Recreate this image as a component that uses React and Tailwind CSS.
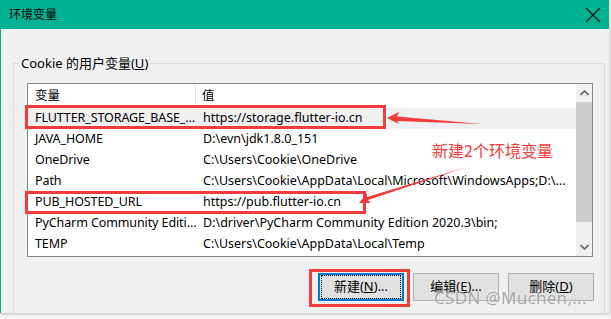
import React from 'react';

const rows = [
  ['FLUTTER_STORAGE_BASE_...', 'https://storage.flutter-io.cn', true],
  ['JAVA_HOME', 'D:\\evn\\jdk1.8.0_151'],
  ['OneDrive', 'C:\\Users\\Cookie\\OneDrive'],
  ['Path', 'C:\\Users\\Cookie\\AppData\\Local\\Microsoft\\WindowsApps;D:\\...'],
  ['PUB_HOSTED_URL', 'https://pub.flutter-io.cn'],
  ['PyCharm Community Editi...', 'D:\\driver\\PyCharm Community Edition 2020.3\\bin;'],
  ['TEMP', 'C:\\Users\\Cookie\\AppData\\Local\\Temp'],
];

const font = { fontFamily: '"Segoe UI", "Noto Sans", "Noto Sans CJK SC", sans-serif' };

function WinButton({ label, hot, rest, isDefault }) {
  return (
    <div
      className={
        'w-[86px] h-[28px] flex items-center justify-center text-[13px] text-black bg-[#e1e1e1] ' +
        (isDefault ? 'border-2 border-[#0078d7]' : 'border border-[#adadad]')
      }
    >
      <div
        className={
          'flex items-center justify-center w-full h-full ' +
          (isDefault ? 'border border-dotted border-black m-[1px]' : '')
        }
      >
        <span>
          {label}(<span className="underline">{hot}</span>){rest}
        </span>
      </div>
    </div>
  );
}

export default function App() {
  return (
    <div className="w-[611px] h-[319px] overflow-hidden relative bg-[#f7f7f7]" style={font}>
      <div className="w-[610px] h-[313px] flex flex-col border-l border-[#00b294] border-r border-r-[#dcdcdc] shadow-[0_1px_3px_rgba(0,0,0,0.25)]">
        {/* title bar */}
        <div className="h-[29px] bg-[#00b294] flex items-center justify-between pl-[8px] pr-[6px] shrink-0">
          <span className="text-[12px] text-black">环境变量</span>
          <svg width="16" height="16" viewBox="0 0 16 16" className="mr-[2px]">
            <path d="M1 1 L15 15 M15 1 L1 15" stroke="#111" strokeWidth="1.2" />
          </svg>
        </div>

        <div className="flex-1 bg-[#f0f0f0] pt-[34px] pl-[12px] pr-[4px]">
          {/* group box */}
          <div className="relative h-full border border-[#dcdcdc] border-b-0 pt-[19px] pl-[13px]">
            <span className="absolute -top-[9px] left-[5px] px-[2px] bg-[#f0f0f0] text-[13px] leading-[17px] text-black">
              Cookie 的用户变量(<span className="underline">U</span>)
            </span>

            {/* list view */}
            <div className="w-[566px] h-[174px] border border-[#828790] bg-white flex">
              <div className="flex-1 flex flex-col text-[12.5px] text-black">
                <div className="h-[24px] flex items-center shrink-0">
                  <div className="w-[168px] h-full pl-[7px] flex items-center border-r border-[#e5e5e5]">变量</div>
                  <div className="pl-[6px]">值</div>
                </div>
                {rows.map(([name, value, sel]) => (
                  <div
                    key={name}
                    className={'h-[21px] flex items-center whitespace-nowrap ' + (sel ? 'bg-[#f0f0f0]' : '')}
                  >
                    <div className="w-[168px] pl-[7px] tracking-[-0.1px]">{name}</div>
                    <div className="pl-[7px] overflow-hidden">{value}</div>
                  </div>
                ))}
              </div>
              {/* scrollbar */}
              <div className="w-[16px] bg-[#f0f0f0] flex flex-col items-center">
                <div className="h-[18px] flex items-center justify-center">
                  <svg width="9" height="6" viewBox="0 0 9 6">
                    <path d="M0.5 5 L4.5 1 L8.5 5" stroke="#606060" strokeWidth="1.6" fill="none" />
                  </svg>
                </div>
                <div className="w-full h-[120px] bg-[#cdcdcd]" />
                <div className="flex-1" />
                <div className="h-[18px] flex items-center justify-center">
                  <svg width="9" height="6" viewBox="0 0 9 6">
                    <path d="M0.5 1 L4.5 5 L8.5 1" stroke="#606060" strokeWidth="1.6" fill="none" />
                  </svg>
                </div>
              </div>
            </div>

            {/* buttons */}
            <div className="flex gap-[9px] mt-[16px] ml-[291px]">
              <WinButton label="新建" hot="N" rest="..." isDefault />
              <WinButton label="编辑" hot="E" rest="..." />
              <WinButton label="删除" hot="D" rest="" />
            </div>
          </div>
        </div>
      </div>

      {/* annotations */}
      <div className="absolute left-[25px] top-[105px] w-[361px] h-[24px] border-[3px] border-[#f03c3c]" />
      <div className="absolute left-[25px] top-[191px] w-[341px] h-[23px] border-[3px] border-[#f03c3c]" />
      <div className="absolute left-[309px] top-[269px] w-[101px] h-[38px] border-[3px] border-[#f03c3c]" />

      <svg className="absolute left-0 top-0" width="611" height="319" viewBox="0 0 611 319">
        <polygon points="387,118 399,112 397,116.5 482,124 397,121 399,124" fill="#f03c3c" />
        <polygon points="359,203 367,193 367,197 467,167 368,200 371,203" fill="#f03c3c" />
      </svg>

      <div
        className="absolute left-[432px] top-[139px] text-[16px] leading-[22px] text-[#f53b3b]"
        style={{ fontFamily: '"Noto Sans CJK SC", sans-serif' }}
      >
        新建2个环境变量
      </div>

      <div
        className="absolute left-[434px] top-[287px] text-[17px] leading-[22px] text-[rgba(140,140,140,0.75)] tracking-[0.3px] [text-shadow:0_0_2px_rgba(255,255,255,0.9)]"
        style={{ fontFamily: '"Noto Sans", sans-serif' }}
      >
        CSDN @Muchen,...
      </div>
    </div>
  );
}
